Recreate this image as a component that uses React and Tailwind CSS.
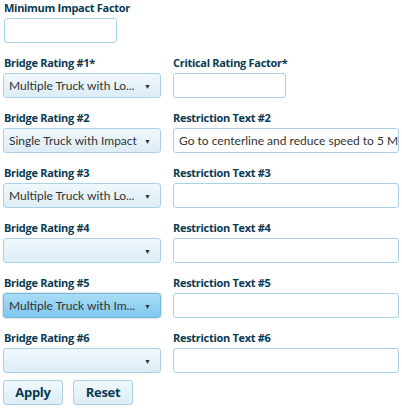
import React from 'react';

const rows = [
    { left: 'Bridge Rating #1*', value: 'Multiple Truck with Lo...', right: 'Critical Rating Factor*', short: true },
    { left: 'Bridge Rating #2', value: 'Single Truck with Impact', right: 'Restriction Text #2', text: 'Go to centerline and reduce speed to 5 MPH' },
    { left: 'Bridge Rating #3', value: 'Multiple Truck with Lo...', right: 'Restriction Text #3' },
    { left: 'Bridge Rating #4', value: '', right: 'Restriction Text #4' },
    { left: 'Bridge Rating #5', value: 'Multiple Truck with Im...', right: 'Restriction Text #5', active: true },
    { left: 'Bridge Rating #6', value: '', right: 'Restriction Text #6' },
];

const labelFont = { fontFamily: '"Open Sans", "Liberation Sans", sans-serif' };

const Label = ({ children }) => (
    <div className="h-4 mb-[2px] text-[11px] leading-4 font-bold tracking-[-0.3px] text-[#0a3a52] whitespace-nowrap" style={labelFont}>
        {children}
    </div>
);

const Select = ({ value, active }) => (
    <div
        className={
            'h-[25px] w-[158px] rounded-[3px] border flex items-center justify-between pl-[5px] pr-[9px] text-[12px] text-[#333] ' +
            (active
                ? 'bg-gradient-to-b from-[#a9dcf5] to-[#7ec8ef] border-[#74b7dc] shadow-[0_0_2px_rgba(0,0,0,0.35)]'
                : 'bg-gradient-to-b from-[#f0f8fc] to-[#dcedf6] border-[#a9d2e8]')
        }
    >
        <span className="whitespace-nowrap overflow-hidden">{value}</span>
        <span className="text-[7px] text-[#333] mt-[2px]">▼</span>
    </div>
);

const TextBox = ({ width, text }) => (
    <div className={'h-[25px] rounded-[3px] border border-[#a9d2e8] bg-white flex items-center pl-[5px] text-[12px] text-[#333] overflow-hidden whitespace-nowrap ' + width}>
        {text}
    </div>
);

const App = () => {
    return (
        <div className="w-[402px] h-[408px] bg-white pl-[3px] overflow-hidden" style={{ fontFamily: 'Lato, "Liberation Sans", sans-serif' }}>
            <div className="flex flex-col gap-3">
                <div className="pl-[1px]">
                    <Label>Minimum Impact Factor</Label>
                    <TextBox width="w-[113px]" />
                </div>
                {rows.map((r) => (
                    <div key={r.left} className="flex gap-3">
                        <div className="w-[158px]">
                            <div className="pl-[1px]"><Label>{r.left}</Label></div>
                            <Select value={r.value} active={r.active} />
                        </div>
                        <div>
                            <Label>{r.right}</Label>
                            <TextBox width={r.short ? 'w-[113px]' : 'w-[226px]'} text={r.text} />
                        </div>
                    </div>
                ))}
            </div>
            <div className="flex gap-[10px] mt-[7px]">
                {['Apply', 'Reset'].map((b) => (
                    <button
                        key={b}
                        className="h-[25px] w-[60px] rounded-[3px] border border-[#a9d2e8] bg-gradient-to-b from-[#f0f8fc] to-[#dcedf6] text-[13px] font-bold tracking-[-0.3px] text-[#0a3a52]"
                        style={labelFont}
                    >
                        {b}
                    </button>
                ))}
            </div>
        </div>
    );
};

export default App;
